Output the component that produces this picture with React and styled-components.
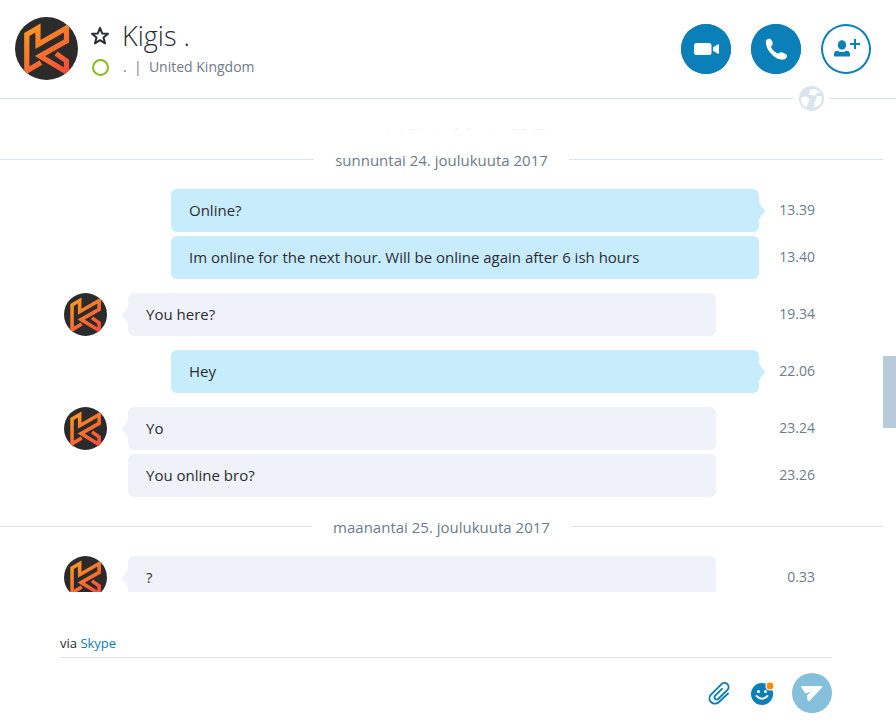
import React from "react";
import styled, { createGlobalStyle } from "styled-components";

const blue = "#0a7fb8";
const line = "#d9e4ec";
const grey = "#6e7b8a";

const GlobalStyle = createGlobalStyle`
  * { box-sizing: border-box; }
  body {
    margin: 0;
    background: #fff;
    color: #2b2c33;
    font-family: "Open Sans", "Noto Sans", sans-serif;
    font-size: 15px;
  }
  button { padding: 0; border: 0; background: none; cursor: pointer; }
`

const Page = styled.div`
  display: flex;
  flex-direction: column;
  height: 100vh;
  overflow: hidden;
`

const Header = styled.header`
  display: flex;
  align-items: flex-start;
  height: 98px;
  padding: 17px 25px 0 15px;
`

const Contact = styled.div`
  flex: 1;
  display: grid;
  grid-template-columns: 20px 1fr;
  grid-template-rows: 38px 24px;
  column-gap: 12px;
  align-items: center;
  justify-items: start;
  margin-left: 12px;
`

const Star = styled.button`
  display: flex;
`

const Name = styled.h1`
  margin: 0;
  font-size: 27px;
  line-height: 38px;
  font-weight: 300;
`

const Presence = styled.span`
  width: 17px;
  height: 17px;
  margin-left: 2px;
  border: 2px solid #84bd1c;
  border-radius: 50%;
`

const Location = styled.p`
  margin: 0;
  padding-left: 1px;
  font-size: 14px;
  line-height: 24px;
  color: ${grey};
  white-space: pre;
`

const Calls = styled.div`
  display: flex;
  gap: 20px;
  padding-top: 7px;
`

const RoundButton = styled.button`
  display: flex;
  align-items: center;
  justify-content: center;
  width: 50px;
  height: 50px;
  border-radius: 50%;
  color: ${props => props.$outline ? blue : "#fff"};
  background: ${props => props.$outline ? "#fff" : blue};
  box-shadow: inset 0 0 0 2px ${blue};
`

const HeaderLine = styled.div`
  display: flex;
  align-items: center;
  gap: 6px;
  height: 26px;
  margin: -13px 0;
`

const Rule = styled.span`
  flex: ${props => props.$width ? `0 0 ${props.$width}` : "1"};
  height: 1px;
  background: ${line};
`

const Chat = styled.main`
  flex: 1;
  min-height: 0;
  display: flex;
  overflow: hidden;
`

const Timeline = styled.div`
  flex: 1;
  padding-top: 26px;
`

const ScrollTrack = styled.div`
  width: 13px;
  padding-top: 258px;
`

const ScrollThumb = styled.div`
  height: 72px;
  background: #b8cbdb;
`

const FadedDate = styled.div`
  height: 6px;
  padding-right: 5px;
  overflow: hidden;
  text-align: center;
  line-height: 18px;
  color: #eceef0;
`

const DateLine = styled.div`
  display: flex;
  align-items: center;
  gap: 21px;
  height: 59px;
  padding-right: 4px;

  ${Rule}:last-child {
    margin-right: -4px;
  }
`

const DateText = styled.span`
  color: ${grey};
`

const Group = styled.section`
  display: flex;
  padding: 0 68px 0 64px;

  & + & {
    margin-top: 14px;
  }
`

const AvatarSlot = styled.div`
  width: 64px;
  height: 43px;
`

const Messages = styled.div`
  flex: 1;
  display: flex;
  flex-direction: column;
  gap: 4px;
`

const MessageRow = styled.div`
  display: flex;
  line-height: 42px;
`

const Bubble = styled.div`
  position: relative;
  flex: 1;
  height: 43px;
  margin: ${props => props.$mine ? "0 0 0 43px" : "0 43px 0 0"};
  padding: 0 18px;
  border-radius: 6px;
  background: ${props => props.$mine ? "#c7ecfc" : "#eff2f8"};
`

const Tail = styled.svg`
  position: absolute;
  top: 11px;
  ${props => props.$mine ? "right: -6px;" : "left: -6px; transform: scaleX(-1);"}
  fill: ${props => props.$mine ? "#c7ecfc" : "#eff2f8"};
`

const Time = styled.time`
  width: 56px;
  text-align: right;
  font-size: 14px;
  color: ${grey};
`

const Footer = styled.footer`
  height: 128px;
  padding: 40px 64px 0 60px;
`

const Via = styled.p`
  margin: 0;
  height: 26px;
  font-size: 13px;
  line-height: 22px;
  border-bottom: 1px solid ${line};

  a {
    color: ${blue};
    text-decoration: none;
  }
`

const Composer = styled.form`
  display: flex;
  align-items: center;
  padding-top: 15px;
`

const MessageInput = styled.input`
  flex: 1;
  min-width: 0;
  height: 40px;
  border: 0;
  outline: 0;
  font: inherit;
`

const ToolButton = styled.button`
  display: flex;
  margin-right: ${props => props.$gap};
`

const Send = styled.button`
  display: flex;
  align-items: center;
  justify-content: center;
  width: 40px;
  height: 40px;
  border-radius: 50%;
  background: #84bfdb;
`

const groups = [
  { mine: true, messages: [["Online?", "13.39"], ["Im online for the next hour. Will be online again after 6 ish hours", "13.40"]] },
  { mine: false, messages: [["You here?", "19.34"]] },
  { mine: true, messages: [["Hey", "22.06"]] },
  { mine: false, messages: [["Yo", "23.24"], ["You online bro?", "23.26"]] },
]

const lateGroup = { mine: false, messages: [["?", "0.33"]] }

const Avatar = ({ size, id }) => (
  <svg width={size} height={size} viewBox="0 0 63 63" role="img" aria-label="Kigis">
    <defs>
      <linearGradient id={id} gradientUnits="userSpaceOnUse" x1="14" y1="8" x2="50" y2="56">
        <stop offset="0" stopColor="#fb9a1f" />
        <stop offset="1" stopColor="#fa4a3a" />
      </linearGradient>
      <clipPath id={`${id}-clip`}>
        <circle cx="31.5" cy="31.5" r="31.5" />
      </clipPath>
    </defs>
    <g clipPath={`url(#${id}-clip)`}>
      <rect width="63" height="63" fill="#2b2b2b" />
      <path
        d="M26 45.5 L11.8 54 V17.5 L23 11 V27.5 L51.5 11 V24 L25 39 L51.5 55 V44 L41 36.5"
        fill="none"
        stroke={`url(#${id})`}
        strokeWidth="5.2"
      />
    </g>
  </svg>
)

const MessageGroup = ({ group, id }) => (
  <Group>
    <AvatarSlot>{!group.mine && <Avatar size={43} id={id} />}</AvatarSlot>
    <Messages>
      {group.messages.map(([text, time], index) => (
        <MessageRow key={time}>
          <Bubble $mine={group.mine}>
            {index === 0 && (
              <Tail $mine={group.mine} width="6" height="22" viewBox="0 0 6 22">
                <path d="M0 0 C0 6 6 9 6 11 C6 13 0 16 0 22 Z" />
              </Tail>
            )}
            {text}
          </Bubble>
          <Time>{time}</Time>
        </MessageRow>
      ))}
    </Messages>
  </Group>
)

const DateSeparator = ({ children }) => (
  <DateLine>
    <Rule />
    <DateText>{children}</DateText>
    <Rule />
  </DateLine>
)

const App = () => {
  return (
    <>
      <GlobalStyle />
      <Page>
        <Header>
          <Avatar size={63} id="header" />
          <Contact>
            <Star aria-label="Favourite">
              <svg width="20" height="20" viewBox="0 0 20 20" fill="none" stroke="#2b2c33" strokeWidth="2" strokeLinejoin="round">
                <path d="M10 2 L12.2 7.4 L18 7.7 L13.5 11.5 L15 17.3 L10 14.2 L5 17.3 L6.5 11.5 L2 7.7 L7.8 7.4 Z" />
              </svg>
            </Star>
            <Name>Kigis .</Name>
            <Presence />
            <Location>{".  |  United Kingdom"}</Location>
          </Contact>
          <Calls>
            <RoundButton aria-label="Video call">
              <svg width="26" height="14" viewBox="0 0 26 14" fill="currentColor">
                <rect x="1" y="1" width="17.5" height="12" rx="2.5" />
                <path d="M20 5.2 L24.5 2.4 Q26 1.7 26 3 V11 Q26 12.3 24.5 11.6 L20 8.8 Z" />
              </svg>
            </RoundButton>
            <RoundButton aria-label="Call">
              <svg width="24" height="24" viewBox="0 0 24 24" fill="currentColor">
                <path d="M2 4 C2.5 1.8 5 1.4 6.5 2 C8 2.6 8.9 6 8.7 7.2 C8.4 8.5 6.9 8.8 7.1 9.8 C7.7 12.2 11 15.6 13.6 16.4 C15 16.8 15.4 15.2 16.8 15.2 C18.4 15.2 22.2 16.8 22.8 18 C23.4 19.8 21.8 22.2 19.8 22.6 C12 24 0.6 12.5 2 4 Z" />
              </svg>
            </RoundButton>
            <RoundButton $outline aria-label="Add people">
              <svg width="28" height="20" viewBox="-2 0 28 20" fill="currentColor">
                <ellipse cx="8" cy="6" rx="4.2" ry="4.7" />
                <path d="M0 17.5 V15 Q0 12 3.5 11.7 Q8 14.5 12.5 11.7 Q16 12 16 15 V17.5 Z" />
                <path d="M20 0 H22 V4 H26 V6 H22 V10 H20 V6 H16 V4 H20 Z" />
              </svg>
            </RoundButton>
          </Calls>
        </Header>
        <HeaderLine>
          <Rule />
          <svg width="25" height="25" viewBox="0 0 25 25">
            <circle cx="12.5" cy="12.5" r="12.5" fill="#d9e4ec" />
            <path
              fill="#fff"
              d="M2 12 L5 10.5 L8.5 11 L10.5 13 L10 16 L8.5 18 L8 21.5 Q3 19.5 2 14 Z
                M10 5 L14 3 Q19 3 21 6.5 L17.5 7.5 L17 9.5 L13 9 L9 8.5 L11.5 6.5 Z
                M17.5 10.5 L22.5 10 Q24 15 20 19.5 L15.5 21.5 L15 17 L17 14 Z"
            />
          </svg>
          <Rule $width="66px" />
        </HeaderLine>
        <Chat>
          <Timeline>
            <FadedDate aria-hidden="true">sunnuntai 24. joulukuuta 2017</FadedDate>
            <DateSeparator>sunnuntai 24. joulukuuta 2017</DateSeparator>
            {groups.map((group, index) => (
              <MessageGroup key={index} group={group} id={`group${index}`} />
            ))}
            <DateSeparator>maanantai 25. joulukuuta 2017</DateSeparator>
            <MessageGroup group={lateGroup} id="late" />
          </Timeline>
          <ScrollTrack>
            <ScrollThumb />
          </ScrollTrack>
        </Chat>
        <Footer>
          <Via>via <a href="#skype">Skype</a></Via>
          <Composer onSubmit={(evt) => evt.preventDefault()}>
            <MessageInput type="text" aria-label="Message" />
            <ToolButton type="button" $gap="21px" aria-label="Attach file">
              <svg width="22" height="24" viewBox="0 0 22 24" fill="none" stroke={blue} strokeWidth="1.9" strokeLinecap="round">
                <path d="M20 12.5 L11 21 C8.5 23.4 5 23 3 21 C1 19 1 15.8 3 13.6 L13 3.6 C15 1.6 17.8 1.6 19.4 3.2 C21 4.8 21 7.4 19.2 9.2 L10.4 17.8 C9.4 18.8 8 18.8 7.1 17.9 C6.2 17 6.2 15.6 7.2 14.6 L14 7.8" />
              </svg>
            </ToolButton>
            <ToolButton type="button" $gap="18px" aria-label="Emoticons">
              <svg width="23" height="24" viewBox="0 0 23 24">
                <circle cx="11" cy="13" r="11" fill={blue} />
                <circle cx="19" cy="5" r="4.6" fill="#fff" />
                <circle cx="19" cy="5" r="3.4" fill="#ff8c00" />
                <circle cx="7.5" cy="10.5" r="1.6" fill="#fff" />
                <circle cx="14.5" cy="10.5" r="1.6" fill="#fff" />
                <path d="M5.5 15 Q11 20.5 16.5 15" fill="none" stroke="#fff" strokeWidth="1.8" strokeLinecap="round" />
              </svg>
            </ToolButton>
            <Send aria-label="Send">
              <svg width="22" height="18" viewBox="0 0 22 18" fill="#fff">
                <path d="M1 2 H20 Q22 2 21 3.6 L9 16.6 Q7 18 6.4 15.5 L6 11.5 L10.5 7.4 L4.5 9.6 L0.6 4 Q-0.4 2.2 1 2 Z" />
              </svg>
            </Send>
          </Composer>
        </Footer>
      </Page>
    </>
  )
}

export default App;
